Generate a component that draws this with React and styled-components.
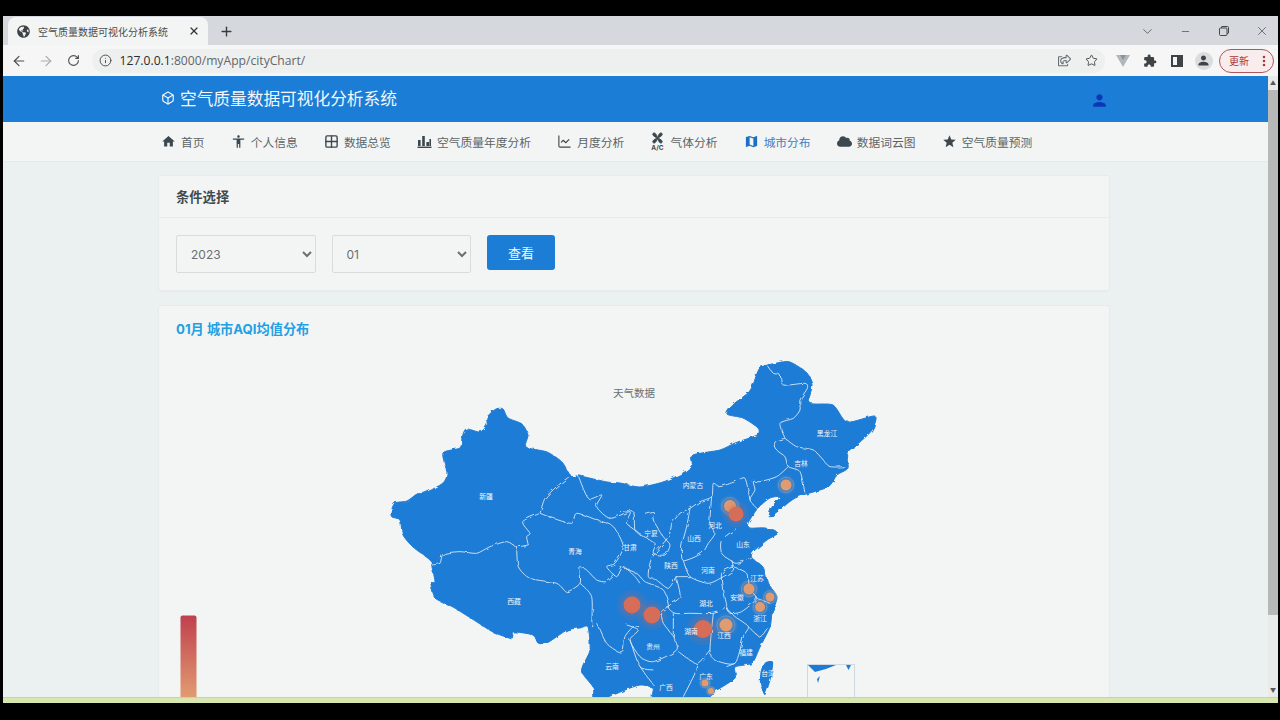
import React from "react";
import styled, { createGlobalStyle } from "styled-components";
import { ArrowLeft, ArrowRight, RotateCw, Info, Star, Box, ChevronDown, Minus, X, Plus, MoreVertical, Grid2X2, ChartLine } from "lucide-react";
import { FaGlobeAmericas, FaRegShareSquare, FaCloud } from "react-icons/fa";
import { MdHome, MdAccessibility, MdMap, MdStar, MdPerson, MdExtension } from "react-icons/md";

const CJK = `"Noto Sans CJK SC", "Noto Sans", sans-serif`;
const PAGE_FONT = `Inter, "Noto Sans CJK SC", sans-serif`;

const GlobalStyle = createGlobalStyle`
  html, body { margin: 0; background: #000; overflow: hidden; }
  * { box-sizing: border-box; }
`;

const Screen = styled.div`
  width: 1280px;
  height: 720px;
  padding: 16px 2px 17px 3px;
  background: #000;
`;
const Window = styled.div`
  height: 687px;
  display: flex;
  flex-direction: column;
  overflow: hidden;
  font-family: ${CJK};
`;

/* browser chrome */
const TabStrip = styled.div`
  height: 29px;
  flex: none;
  display: flex;
  align-items: flex-end;
  padding-left: 5px;
  background: #d5d8dc;
`;
const Tab = styled.div`
  width: 200px;
  height: 28px;
  display: flex;
  align-items: center;
  padding: 0 8px 0 9px;
  background: #f3f5f4;
  border-radius: 8px 8px 0 0;
  color: #4a4d50;
  font-size: 10px;
  svg { flex: none; }
`;
const TabTitle = styled.span`
  margin-left: 8px;
  flex: 1;
  white-space: nowrap;
`;
const NewTab = styled.div`
  width: 36px;
  height: 28px;
  display: flex;
  align-items: center;
  justify-content: center;
  color: #3a3d40;
`;
const WindowControls = styled.div`
  margin: 0 -2.5px 0 auto;
  height: 28px;
  display: flex;
  align-items: center;
  color: #44474a;
`;
const WinButton = styled.div`
  width: 38px;
  display: flex;
  justify-content: center;
`;
const Toolbar = styled.div`
  height: 31px;
  flex: none;
  display: flex;
  align-items: center;
  padding-left: 2.5px;
  background: #f5f6f5;
  color: #4a4e51;
`;
const ToolButton = styled.div`
  width: 27px;
  height: 24px;
  flex: none;
  display: flex;
  align-items: center;
  justify-content: center;
  color: ${(p) => p.$color || "#4a4e51"};
`;
const Omnibox = styled.div`
  width: 1013px;
  height: 24px;
  margin: 0 4.5px 0 5px;
  flex: none;
  display: flex;
  align-items: center;
  padding-left: 7px;
  border-radius: 12px;
  background: #eef0ef;
`;
const Url = styled.div`
  flex: 1;
  margin-left: 8px;
  font: 12.15px "Open Sans", sans-serif;
  color: #63676a;
  b { font-weight: 400; color: #2a2d30; }
`;
const SidePanelIcon = styled.div`
  width: 12px;
  height: 12px;
  border: 2px solid #3f4346;
  border-right-width: 6px;
`;
const Avatar = styled.div`
  width: 18px;
  height: 18px;
  border-radius: 50%;
  background: #dadcdf;
  display: flex;
  align-items: center;
  justify-content: center;
  color: #3f4346;
`;
const UpdatePill = styled.div`
  width: 55px;
  height: 24px;
  margin-left: 2px;
  flex: none;
  display: flex;
  align-items: center;
  justify-content: space-between;
  padding: 0 2px 0 9px;
  border: 1px solid #b0565c;
  border-radius: 12px;
  background: #f8ecec;
  color: #a8383c;
  font-size: 10px;
`;

/* page */
const Viewport = styled.div`
  flex: 1;
  min-height: 0;
  display: flex;
`;
const Page = styled.div`
  flex: 1;
  min-width: 0;
  background: #ebf0f1;
  color: #4a5459;
  font-family: ${PAGE_FONT};
  overflow: hidden;
`;
const Header = styled.header`
  height: 46px;
  display: flex;
  align-items: center;
  justify-content: space-between;
  padding: 0 159px 2px 158px;
  background: #1c7dd6;
  color: #f2f7fb;
`;
const Brand = styled.div`
  display: flex;
  align-items: center;
  gap: 5px;
  font-size: 16.7px;
  font-family: ${CJK};
`;
const UserIcon = styled(MdPerson)`
  color: #0b37b8;
  margin: 5px 0 0;
`;
const Nav = styled.nav`
  height: 40px;
  display: flex;
  align-items: center;
  gap: 26.2px;
  padding-left: 158px;
  background: #f3f5f4;
  border-bottom: 1px solid #e6e9ea;
`;
const NavItem = styled.div`
  display: flex;
  align-items: center;
  gap: 5px;
  font-size: 11.75px;
  font-family: ${CJK};
  white-space: nowrap;
  color: ${(p) => (p.$active ? "#3f7cc4" : "#5c6467")};
  svg { flex: none; color: ${(p) => (p.$active ? "#1c6fc6" : "#3c484e")}; }
`;
const Content = styled.main`
  padding: 14px 0 0 156px;
  display: flex;
  flex-direction: column;
  gap: 16px;
`;
const Card = styled.section`
  width: 950px;
  background: #f3f5f4;
  border-radius: 2px;
  box-shadow: 0 0 0 1px #e8ebec, 0 1px 2px rgba(120, 130, 140, 0.12);
`;
const CardHeader = styled.div`
  height: 42px;
  display: flex;
  align-items: center;
  padding-left: 17px;
  border-bottom: 1px solid #e8ebec;
  font-size: 13.3px;
  font-weight: 700;
  color: #3f4b50;
`;
const FilterRow = styled.div`
  height: 72px;
  display: flex;
  align-items: flex-start;
  gap: 16px;
  padding: 17px 0 0 17px;
`;
const Select = styled.select`
  width: 139.5px;
  height: 38px;
  padding-left: 10px;
  border: 1px solid #d9dcdd;
  border-radius: 2px;
  background-color: #f3f5f4;
  color: #6a6f72;
  font: 12px Inter, sans-serif;
`;
const SubmitButton = styled.button`
  width: 68px;
  height: 35px;
  border: 0;
  border-radius: 3px;
  background: #1c7dd6;
  color: #eef5fb;
  font: 13px ${CJK};
`;
const ChartTitle = styled.h2`
  margin: 0;
  padding: 14px 0 7px 17px;
  font: 700 13.2px/18px ${PAGE_FONT};
  color: #22a0e4;
`;
const ChartSvg = styled.svg`
  display: block;
  width: 950px;
  height: 360px;
`;

/* chrome scrollbar and the download bar strip */
const Scrollbar = styled.div`
  width: 10px;
  flex: none;
  display: flex;
  flex-direction: column;
  align-items: center;
  background: #e9ebea;
  color: #55585a;
`;
const ScrollArrow = styled.div`
  height: 14px;
  flex: none;
  display: flex;
  align-items: center;
  font-size: 6px;
  line-height: 1;
`;
const ScrollThumb = styled.div`
  width: 100%;
  height: 525px;
  flex: none;
  background: #b6b9b7;
`;
const ScrollGap = styled.div`
  flex: 1;
`;
const BottomStrip = styled.div`
  height: 6px;
  flex: none;
  border-top: 1px solid #c6d4a2;
  background: #d8e6b0;
`;

/* map geometry, page coordinates */
const CHINA = "391,512 395,503 407,501 417,494 425,493 443,483 447,473 443,453 460,448 462,438 466,429 480,432 487,425 487,417 496,409 503,409 508,418 522,424 528,435 526,447 547,452 562,462 571,476 580,476 607,482 620,483 640,487 663,482 683,473 692,465 693,455 720,450 735,443 757,435 758,428 743,418 727,414 735,403 748,393 753,385 760,368 777,363 790,362 807,373 812,385 810,403 833,405 847,422 875,416 872,430 860,442 847,453 848,468 837,475 828,487 803,495 792,500 770,517 772,507 780,497 770,498 758,508 748,523 750,528 765,528 778,533 767,540 753,552 752,558 763,567 768,583 777,597 772,613 770,627 760,647 752,663 735,667 735,678 717,690 705,697 655,700 653,688 640,685 625,690 613,695 595,700 593,687 582,673 583,665 590,650 588,627 580,628 567,630 547,643 538,643 533,635 513,632 513,639 493,632 477,622 453,607 435,598 430,583 435,582 432,567 430,560 413,547 403,535 400,520 392,517";
const TAIWAN = "766,662 773,662 771,678 765,695 760,683 761,670";

// borders as measured on the left half and the right half of the map, 3x crop coordinates
const WEST_BORDERS = [
  "155,645 180,640 190,612 240,605 290,610 330,590 380,575 410,590 445,585",
  "445,585 440,560 450,550 428,515 480,490",
  "480,490 495,445 530,410 570,378",
  "480,490 520,505 575,520 590,490 650,510 700,530 730,590 705,640 680,650 710,680 730,650 765,680 780,700",
  "410,590 415,650 450,685 530,700 560,725 600,700 600,655 620,660 650,690 680,695 705,675",
  "600,700 635,740 635,830",
  "595,378 625,445 665,435 650,470 690,505 750,485 740,520 780,550",
  "650,820 680,880 715,905 730,900 735,860 760,830 780,830",
];
const EAST_BORDERS = [
  "445,50 460,70 480,75 490,105 555,100 562,115 540,150 540,180 520,205 480,220 495,265",
  "495,265 465,275 470,300 495,320 505,350 540,365 555,430",
  "495,265 530,290 580,300 610,330 630,350 680,350",
  "505,350 470,380 420,395 400,395 405,420 390,450 415,480",
  "390,450 375,385 345,395 300,410 280,400 275,440 240,455 210,475 180,490 155,520",
  "275,440 270,520 285,550 265,580 245,610 190,632 185,590 200,530 210,475",
  "350,535 305,570 305,610 330,630 350,640 395,625",
  "190,632 210,680 265,700 310,680 340,660 335,630",
  "340,650 305,670 310,730 320,770 330,790 365,785 410,745 385,715 380,670 340,650",
  "410,745 450,760",
  "168,680 210,680",
  "168,680 180,740 145,770 165,790 210,790 280,790 320,775",
  "280,790 270,900 285,930 345,940 370,860 385,830 345,800 320,775",
  "385,830 420,860 445,830",
  "345,940 320,950",
  "155,520 145,560 95,625 85,680 110,690 145,715 168,680",
  "75,490 100,485 100,510 130,560 150,585 135,615 100,610 105,580 70,560 45,540 40,485 0,485",
  "0,650 50,670 75,695 130,720 145,770 125,790 130,820 160,860 170,900 100,935 60,920 30,870 55,840 20,825",
  "160,790 160,860",
  "175,905 230,940 270,900",
  "230,940 225,970 190,1040",
  "100,960 60,950 30,870",
  "60,950 100,1005",
];

// rounds the measured points into a curve so borders don't read as straight segments
const smooth = (str, closed) => {
  const pts = str.split(" ").map((p) => p.split(",").map(Number));
  const n = pts.length;
  const at = (i) => (closed ? pts[(i + n) % n] : pts[Math.max(0, Math.min(n - 1, i))]);
  let d = `M${pts[0][0]} ${pts[0][1]}`;
  const k = 0.12;
  for (let i = 0; i < (closed ? n : n - 1); i++) {
    const [p0, p1, p2, p3] = [at(i - 1), at(i), at(i + 1), at(i + 2)];
    d += ` C${p1[0] + (p2[0] - p0[0]) * k} ${p1[1] + (p2[1] - p0[1]) * k} ${p2[0] - (p3[0] - p1[0]) * k} ${p2[1] - (p3[1] - p1[1]) * k} ${p2[0]} ${p2[1]}`;
  }
  return closed ? `${d} Z` : d;
};

const LABELS = [
  ["新疆", 486, 496], ["西藏", 514, 601], ["青海", 575, 551], ["甘肃", 630, 547], ["宁夏", 651, 533],
  ["内蒙古", 693, 485], ["黑龙江", 827, 433], ["吉林", 801, 463], ["河北", 715, 525], ["山西", 694, 538],
  ["山东", 743, 544], ["陕西", 671, 565], ["河南", 708, 570], ["湖北", 706, 603], ["江苏", 757, 578],
  ["安徽", 737, 597], ["浙江", 760, 618], ["江西", 724, 635], ["湖南", 691, 631], ["贵州", 653, 646],
  ["福建", 746, 652], ["云南", 612, 666], ["广西", 666, 687], ["广东", 706, 676], ["台湾", 768, 673],
];

const HOT = "#d56d58";
const WARM = "#e09b70";
const POINTS = [
  [632, 605, 8.5, HOT], [652, 615, 8.5, HOT], [703, 629, 9, HOT], [730, 506, 6, WARM], [736, 514, 7.5, HOT],
  [726, 625, 6.5, WARM], [749, 589, 5.5, WARM], [760, 607, 5, WARM], [770, 597, 4.5, WARM], [786, 485, 5.5, WARM],
  [705, 683, 3.5, WARM], [711, 691, 3, WARM],
];

const FanIcon = () => (
  <svg width="15" height="19" viewBox="0 0 15 19">
    <path d="M7.5 6 C5 5 2 3.5 3 1.5 C4.5 0 6.5 2 7.5 6 Z M7.5 6 C10 5 13 3.5 12 1.5 C10.5 0 8.5 2 7.5 6 Z M7.5 6 C5 7 2 8.5 3 10.5 C4.5 12 6.5 10 7.5 6 Z M7.5 6 C10 7 13 8.5 12 10.5 C10.5 12 8.5 10 7.5 6 Z" fill="#3c484e" stroke="#3c484e" />
    <text x="7.5" y="18" textAnchor="middle" fontSize="6.5" fontWeight="700" fontFamily="Inter, sans-serif" fill="#3c484e">A/C</text>
  </svg>
);

const BarsIcon = () => (
  <svg width="15" height="15" viewBox="0 0 15 15" fill="#3c484e">
    <rect x="1" y="6" width="2.6" height="6" />
    <rect x="5.2" y="2" width="2.6" height="10" />
    <rect x="9.4" y="8" width="2.6" height="4" />
    <rect x="12.4" y="5" width="1.6" height="7" />
    <rect x="0.5" y="12.6" width="14" height="1.4" />
  </svg>
);

const DevtoolsIcon = () => (
  <svg width="14" height="12" viewBox="0 0 14 12">
    <path d="M0 0 H14 L7 12 Z" fill="#b3b7b9" />
    <path d="M4 0 H10 L7 5 Z" fill="#8d9295" />
  </svg>
);

const RestoreIcon = () => (
  <svg width="10" height="10" viewBox="0 0 10 10" fill="none" stroke="currentColor">
    <rect x="0.5" y="2" width="7.5" height="7.5" rx="1" />
    <path d="M2.5 2 V1 Q2.5 0.5 3 0.5 H8.5 Q9.5 0.5 9.5 1.5 V7 Q9.5 7.5 8 7.5" />
  </svg>
);

const NAV_ITEMS = [
  { icon: <MdHome size={15} />, label: "首页" },
  { icon: <MdAccessibility size={15} />, label: "个人信息" },
  { icon: <Grid2X2 size={15} strokeWidth={2.2} />, label: "数据总览" },
  { icon: <BarsIcon />, label: "空气质量年度分析" },
  { icon: <ChartLine size={15} strokeWidth={1.8} />, label: "月度分析" },
  { icon: <FanIcon />, label: "气体分析" },
  { icon: <MdMap size={15} />, label: "城市分布", active: true },
  { icon: <FaCloud size={15} />, label: "数据词云图" },
  { icon: <MdStar size={15} />, label: "空气质量预测" },
];

const Marker = ({ x, y, r, color }) => (
  <g>
    <circle cx={x} cy={y} r={r * 1.8} fill={color} opacity="0.1" />
    <circle cx={x} cy={y} r={r * 1.35} fill={color} opacity="0.14" />
    {color === WARM && <circle cx={x} cy={y} r={r * 1.4} fill="none" stroke="#f3d9cc" strokeWidth="0.4" opacity="0.6" />}
    <circle cx={x} cy={y} r={r} fill={color} />
  </g>
);

const ChinaMap = () => (
  <ChartSvg viewBox="159 345 950 360">
    <defs>
      <linearGradient id="scale" x1="0" y1="0" x2="0" y2="1">
        <stop offset="0" stopColor="#bf404e" />
        <stop offset="0.55" stopColor="#e0966f" />
        <stop offset="1" stopColor="#efcf9a" />
      </linearGradient>
      <filter id="rough" filterUnits="userSpaceOnUse" x="370" y="345" width="530" height="370">
        <feTurbulence type="fractalNoise" baseFrequency="0.14" numOctaves="2" seed="4" />
        <feDisplacementMap in="SourceGraphic" scale="3.5" />
      </filter>
    </defs>
    <text x="634" y="397" textAnchor="middle" fontSize="10.5" fill="#6b6f72" fontFamily={CJK}>天气数据</text>
    <g filter="url(#rough)">
      <path d={smooth(CHINA, true)} fill="#1c7bd6" stroke="#1c7bd6" strokeLinejoin="round" />
      <path d={smooth(TAIWAN, true)} fill="#1c7bd6" />
      <g fill="none" stroke="#dcebf8" strokeWidth="2.7" strokeLinejoin="round">
        <g transform="translate(380 350) scale(0.3333)">
          {WEST_BORDERS.map((b) => <path key={b} d={smooth(b)} />)}
        </g>
        <g transform="translate(620 350) scale(0.3333)">
          {EAST_BORDERS.map((b) => <path key={b} d={smooth(b)} />)}
        </g>
      </g>
    </g>
    <rect x="807.5" y="664.5" width="47" height="50" fill="none" stroke="#cfd9e2" />
    <path d="M808 665 H836 Q825 670 815 672 Z M846 665 H851 L848.5 670 Z M817 679 L820 676 L818 683 Z" fill="#1c7bd6" />
    {POINTS.map(([x, y, r, color]) => <Marker key={`${x}-${y}`} x={x} y={y} r={r} color={color} />)}
    {LABELS.map(([name, x, y]) => (
      <text key={name} x={x} y={y + 2.5} textAnchor="middle" fontSize="6.8" fill="#f2f7fb" fontFamily={CJK}>{name}</text>
    ))}
    <rect x="180.5" y="615.5" width="16" height="140" rx="2" fill="url(#scale)" />
  </ChartSvg>
);

const App = () => {
  return (
    <Screen>
      <GlobalStyle />
      <Window>
        <TabStrip>
          <Tab>
            <FaGlobeAmericas size={13} color="#3f4346" />
            <TabTitle>空气质量数据可视化分析系统</TabTitle>
            <X size={12} strokeWidth={2.5} color="#33363a" />
          </Tab>
          <NewTab><Plus size={15} strokeWidth={2.2} /></NewTab>
          <WindowControls>
            <WinButton><ChevronDown size={15} strokeWidth={1.2} /></WinButton>
            <WinButton><Minus size={11} strokeWidth={1.5} /></WinButton>
            <WinButton><RestoreIcon /></WinButton>
            <WinButton><X size={14} strokeWidth={1.2} /></WinButton>
          </WindowControls>
        </TabStrip>
        <Toolbar>
          <ToolButton><ArrowLeft size={16} strokeWidth={1.8} /></ToolButton>
          <ToolButton $color="#a9adb0"><ArrowRight size={16} strokeWidth={1.8} /></ToolButton>
          <ToolButton><RotateCw size={13} strokeWidth={2} /></ToolButton>
          <Omnibox>
            <Info size={13} strokeWidth={1.8} />
            <Url><b>127.0.0.1</b>:8000/myApp/cityChart/</Url>
            <ToolButton><FaRegShareSquare size={13} color="#6a6e71" /></ToolButton>
            <ToolButton><Star size={13} strokeWidth={1.8} /></ToolButton>
          </Omnibox>
          <ToolButton><DevtoolsIcon /></ToolButton>
          <ToolButton><MdExtension size={14} color="#3f4346" /></ToolButton>
          <ToolButton><SidePanelIcon /></ToolButton>
          <ToolButton><Avatar><MdPerson size={15} /></Avatar></ToolButton>
          <UpdatePill>更新<MoreVertical size={14} strokeWidth={2.4} color="#a8383c" /></UpdatePill>
        </Toolbar>
        <Viewport>
          <Page>
            <Header>
              <Brand><Box size={14} strokeWidth={2} />空气质量数据可视化分析系统</Brand>
              <UserIcon size={19} />
            </Header>
            <Nav>
              {NAV_ITEMS.map((item) => (
                <NavItem key={item.label} $active={item.active}>
                  {item.icon}
                  {item.label}
                </NavItem>
              ))}
            </Nav>
            <Content>
              <Card>
                <CardHeader>条件选择</CardHeader>
                <FilterRow>
                  <Select defaultValue="2023"><option>2023</option></Select>
                  <Select defaultValue="01"><option>01</option></Select>
                  <SubmitButton>查看</SubmitButton>
                </FilterRow>
              </Card>
              <Card>
                <ChartTitle>01月 城市AQI均值分布</ChartTitle>
                <ChinaMap />
              </Card>
            </Content>
          </Page>
          <Scrollbar>
            <ScrollArrow>▲</ScrollArrow>
            <ScrollThumb />
            <ScrollGap />
            <ScrollArrow>▼</ScrollArrow>
          </Scrollbar>
        </Viewport>
        <BottomStrip />
      </Window>
    </Screen>
  );
};

export default App;
